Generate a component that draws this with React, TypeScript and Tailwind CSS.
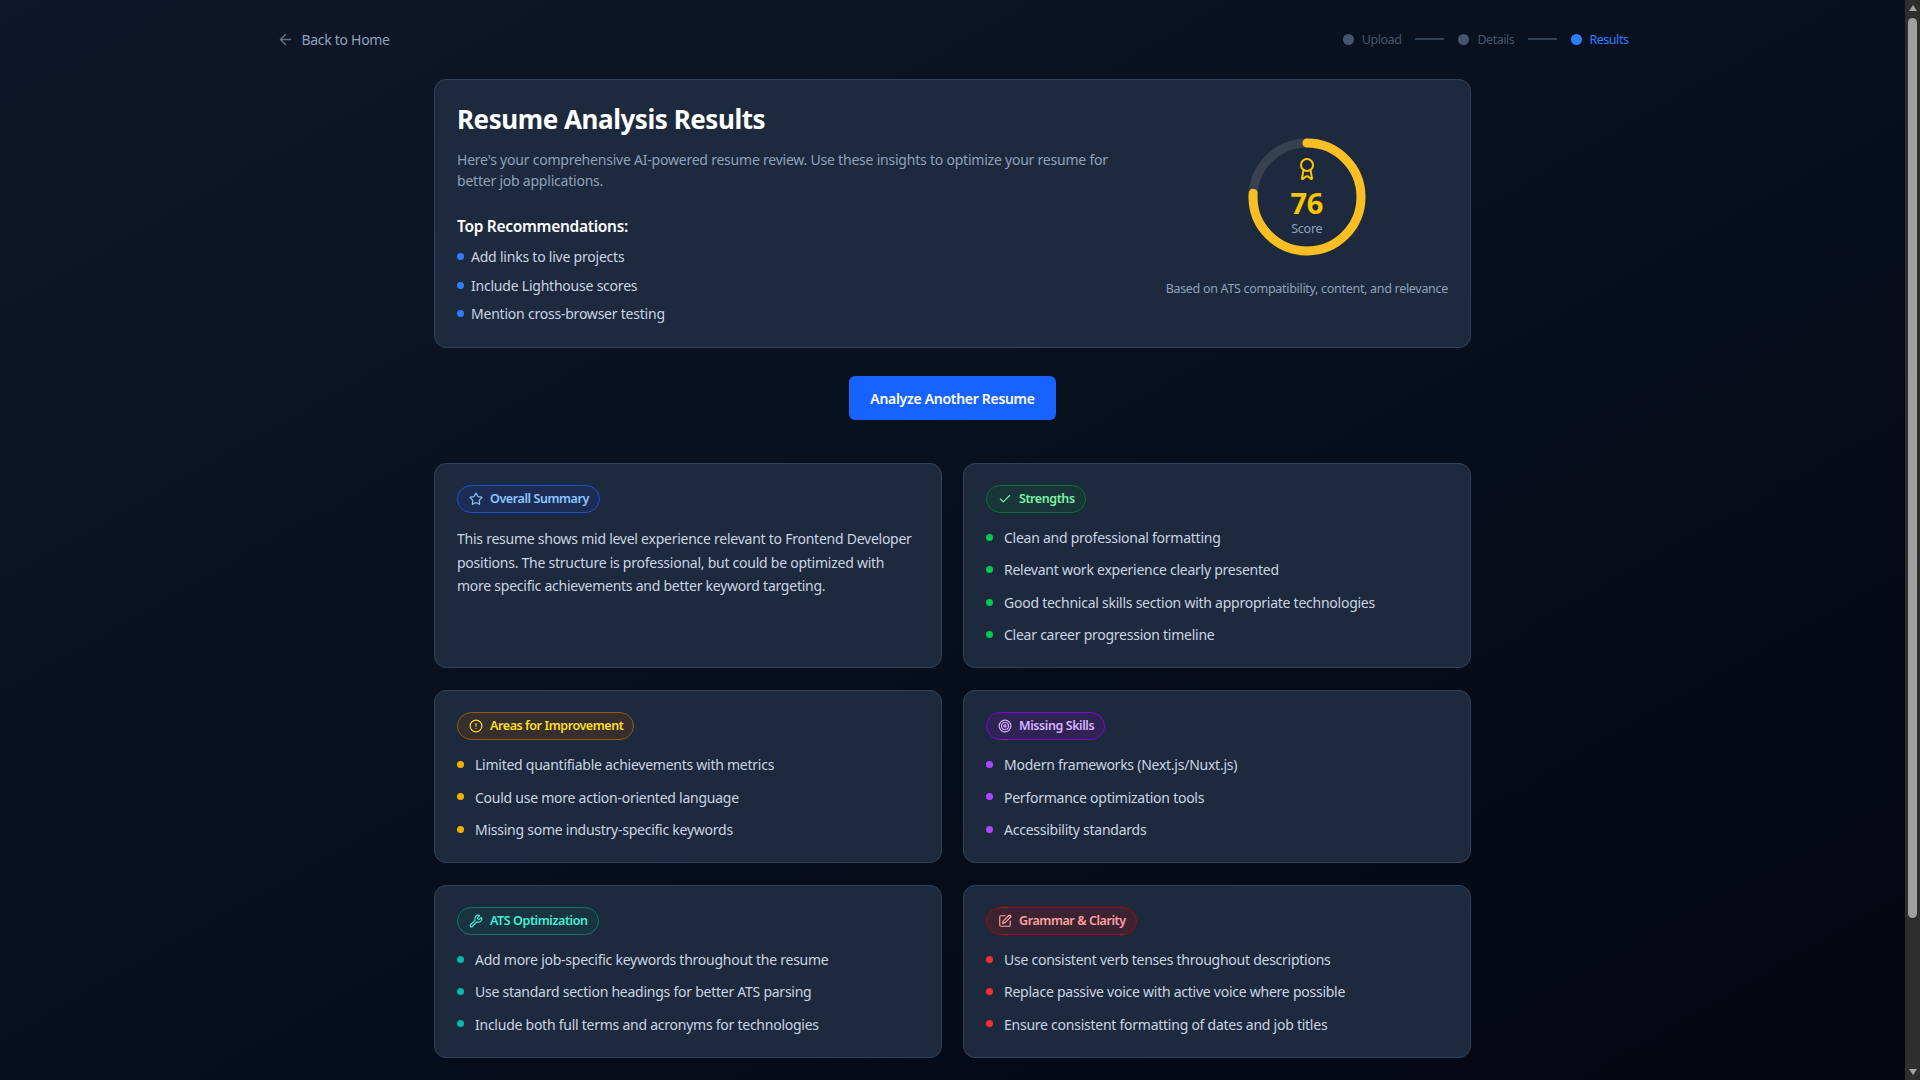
import React from "react";
import { ArrowLeft, Award, Star, Check, CircleAlert, Target, Wrench, SquarePen } from "lucide-react";

const sections = [
  {
    title: "Overall Summary",
    Icon: Star,
    pill: "border-[#1d4ed8] bg-blue-900/30 text-blue-300",
    dot: "bg-blue-500",
    text: "This resume shows mid level experience relevant to Frontend Developer positions. The structure is professional, but could be optimized with more specific achievements and better keyword targeting.",
    items: [] as string[],
  },
  {
    title: "Strengths",
    Icon: Check,
    pill: "border-[#0b7038] bg-green-900/30 text-green-300",
    dot: "bg-green-500",
    items: [
      "Clean and professional formatting",
      "Relevant work experience clearly presented",
      "Good technical skills section with appropriate technologies",
      "Clear career progression timeline",
    ],
  },
  {
    title: "Areas for Improvement",
    Icon: CircleAlert,
    pill: "border-[#92590c] bg-yellow-900/30 text-yellow-300",
    dot: "bg-yellow-500",
    items: [
      "Limited quantifiable achievements with metrics",
      "Could use more action-oriented language",
      "Missing some industry-specific keywords",
    ],
  },
  {
    title: "Missing Skills",
    Icon: Target,
    pill: "border-purple-700 bg-purple-900/30 text-purple-300",
    dot: "bg-purple-500",
    items: [
      "Modern frameworks (Next.js/Nuxt.js)",
      "Performance optimization tools",
      "Accessibility standards",
    ],
  },
  {
    title: "ATS Optimization",
    Icon: Wrench,
    pill: "border-[#0f766e] bg-teal-900/30 text-teal-300",
    dot: "bg-teal-500",
    items: [
      "Add more job-specific keywords throughout the resume",
      "Use standard section headings for better ATS parsing",
      "Include both full terms and acronyms for technologies",
    ],
  },
  {
    title: "Grammar & Clarity",
    Icon: SquarePen,
    pill: "border-red-800 bg-red-900/30 text-red-300",
    dot: "bg-red-500",
    items: [
      "Use consistent verb tenses throughout descriptions",
      "Replace passive voice with active voice where possible",
      "Ensure consistent formatting of dates and job titles",
    ],
  },
];

const recommendations = ["Add links to live projects", "Include Lighthouse scores", "Mention cross-browser testing"];

const App: React.FC = () => {
  return (
    <div className="flex h-screen overflow-hidden font-['Noto_Sans',sans-serif] tracking-[-0.25px] bg-gradient-to-br from-[#0f172a] to-[#030712]">
      <main className="flex-1 min-w-0 overflow-hidden">
        {/* Top bar */}
        <div className="mx-auto w-[1352px] h-[79px] flex items-center justify-between pb-[1px]">
          <div className="flex items-center gap-[8px] text-[14px] tracking-[-0.3px] text-slate-400">
            <ArrowLeft className="w-[17px] h-[17px] text-gray-500" />
            <span>Back to Home</span>
          </div>
          <div className="flex items-center mt-[2px] text-[12.5px] tracking-[-0.45px] text-slate-600">
            <span className="w-[11px] h-[11px] mb-[2px] rounded-full bg-slate-600" />
            <span className="ml-[8px]">Upload</span>
            <span className="ml-[14px] w-[29px] h-[2px] mb-[2px] bg-slate-700" />
            <span className="ml-[14px] w-[11px] h-[11px] mb-[2px] rounded-full bg-slate-600" />
            <span className="ml-[8px]">Details</span>
            <span className="ml-[14px] w-[29px] h-[2px] mb-[2px] bg-slate-700" />
            <span className="ml-[14px] w-[11px] h-[11px] mb-[2px] rounded-full bg-blue-500" />
            <span className="ml-[7px] text-blue-500">Results</span>
          </div>
        </div>

        <div className="mx-auto w-[1037px]">
          {/* Score header */}
          <section className="h-[269px] rounded-xl border border-slate-700 bg-slate-800 px-[22px] pt-[21px] flex justify-between">
            <div className="w-[660px]">
              <h1 className="text-[26px] leading-[36px] font-bold tracking-[-0.45px] text-white">Resume Analysis Results</h1>
              <p className="mt-[12px] text-[14px] leading-[21px] tracking-[-0.22px] text-slate-400">
                Here's your comprehensive AI-powered resume review. Use these insights to optimize your resume for better job applications.
              </p>
              <h2 className="mt-[24px] text-[15.5px] leading-[22px] font-semibold tracking-[-0.3px] text-white">Top Recommendations:</h2>
              <ul className="mt-[9px] flex flex-col gap-[7px]">
                {recommendations.map((r) => (
                  <li key={r} className="flex items-center gap-[7px] text-[14px] leading-[21.5px] tracking-[-0.22px] text-slate-300">
                    <span className="w-[7px] h-[7px] rounded-full bg-blue-500" />
                    {r}
                  </li>
                ))}
              </ul>
            </div>
            <div className="flex flex-col items-center pt-[37px]">
              <div className="relative w-[118px] h-[118px]">
                <svg viewBox="0 0 118 118" className="w-full h-full -rotate-90">
                  <circle cx="59" cy="59" r="54" fill="none" stroke="#374151" strokeWidth="9" />
                  <circle cx="59" cy="59" r="54" fill="none" stroke="#fbbf24" strokeWidth="9" strokeLinecap="round" strokeDasharray="257.9 339.3" />
                </svg>
                <div className="absolute inset-0 flex flex-col items-center pt-[19px]">
                  <Award className="w-[24px] h-[24px] text-yellow-400" strokeWidth={2} />
                  <span className="mt-[5px] text-[29px] leading-[34px] font-bold text-yellow-400">76</span>
                  <span className="text-[12.5px] leading-[18px] text-slate-400">Score</span>
                </div>
              </div>
              <p className="mt-[23px] text-[12.5px] leading-[20px] tracking-[-0.3px] text-slate-400">Based on ATS compatibility, content, and relevance</p>
            </div>
          </section>

          <div className="flex justify-center mt-[28px] mb-[43px]">
            <button className="h-[44px] w-[207px] rounded-md bg-[#1863ff] text-[14px] font-semibold tracking-[-0.3px] text-white">Analyze Another Resume</button>
          </div>

          {/* Result cards */}
          <div className="grid grid-cols-2 gap-x-[21px] gap-y-[22px]">
            {sections.map(({ title, Icon, pill, dot, text, items }) => (
              <section key={title} className="rounded-xl border border-slate-700 bg-slate-800 px-[22px] pt-[21px] pb-[20.5px]">
                <div className={`inline-flex items-center align-top h-[28px] gap-[7px] rounded-full border pl-[11px] pr-[10px] text-[12.5px] font-semibold tracking-[-0.42px] ${pill}`}>
                  <Icon className="w-[14px] h-[14px]" />
                  <span className="pt-[1px]">{title}</span>
                </div>
                {text ? (
                  <p className="mt-[14px] text-[14px] leading-[23.5px] text-slate-300">{text}</p>
                ) : (
                  <ul className="mt-[14px] flex flex-col gap-[10px]">
                    {items.map((item) => (
                      <li key={item} className="flex items-center gap-[11px] text-[14px] leading-[22.4px] text-slate-300">
                        <span className={`w-[7px] h-[7px] mb-[2px] rounded-full ${dot}`} />
                        {item}
                      </li>
                    ))}
                  </ul>
                )}
              </section>
            ))}
          </div>
        </div>
      </main>

      {/* Browser scrollbar */}
      <aside className="w-[15px] shrink-0 bg-[#2e2e2e] flex flex-col items-center pt-[5px]">
        <span className="w-0 h-0 border-x-[4px] border-x-transparent border-b-[6px] border-b-[#a3a3a3]" />
        <span className="mt-[7px] w-[9px] h-[900px] rounded-full bg-[#9f9f9f]" />
        <span className="mt-auto mb-[5px] w-0 h-0 border-x-[4px] border-x-transparent border-t-[6px] border-t-[#a3a3a3]" />
      </aside>
    </div>
  );
};

export default App;
